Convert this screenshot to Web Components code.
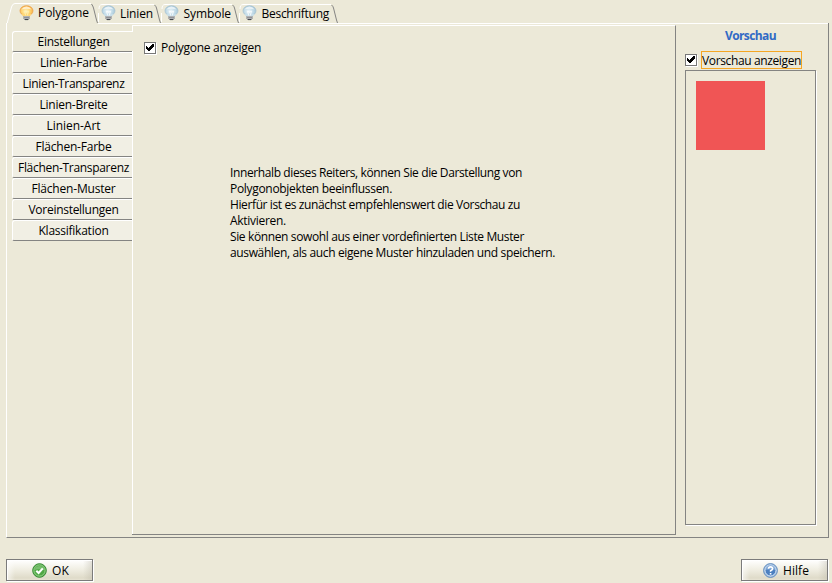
<!DOCTYPE html>
<html lang="de"><head><meta charset="utf-8"><title>Polygone</title>
<style>
html,body{margin:0;width:832px;height:583px;overflow:hidden;background:#ece9d8}
body{font:12px/16px "Open Sans","Noto Sans",sans-serif;color:#000;display:flex;flex-direction:column}
</style></head><body>
<style-dialog></style-dialog>
<script>
const make=(name,html,init)=>customElements.define(name,class extends HTMLElement{
  connectedCallback(){ if(this.shadowRoot)return; const t=document.createElement('template');
    t.innerHTML=html; this.attachShadow({mode:'open'}).append(t.content.cloneNode(true)); if(init)init(this,this.shadowRoot);}
});
// Text line set to a fixed advance width through letter spacing
make('fit-text','<style>:host{display:block;white-space:pre;flex:none}span{display:inline-block}</style><span></span>',(e,r)=>{
  const s=r.querySelector('span'),w=+e.getAttribute('w'); s.textContent=e.getAttribute('text');
  e.style.width=w+'px'; const d=(w-s.getBoundingClientRect().width)/s.textContent.length; s.style.letterSpacing=d+'px';
});
make('bulb-icon',`<style>:host{display:block;width:16px;height:16px;flex:none}svg{display:block}</style>
<svg width="16" height="16" viewBox="0 0 16 16"><defs><radialGradient id="g" cx=".45" cy=".55" r=".6"><stop offset="0" class="a"/><stop offset=".5" class="b"/><stop offset="1" class="c"/></radialGradient></defs>
<ellipse cx="7.5" cy="5.8" rx="6.5" ry="5.1" fill="url(#g)" class="rim"/><path d="M2.6 9 4.6 12h5.8l2-3z" class="n"/>
<path d="M2.3 4.6Q4.5 1.3 7.5 1.4T12.7 4.6Q7.5 2.8 2.3 4.6z" fill="#fff" opacity=".65"/><path d="M5.5 6.2 6.7 10.5M9.5 6.2 8.3 10.5M5.5 6.2l2 1 2-1" class="f"/>
<path d="M4.5 11h6v2.5L9.3 15H5.7L4.5 13.5z" fill="#777b80"/><path d="M4.7 11.7h5.6M4.9 13.3h5" stroke="#ddd" stroke-width=".7"/><path d="M6 14.6h3" stroke="#3d4147"/></svg>`,(e,r)=>{
  const on=e.hasAttribute('on'),c=on?['#fff6c8','#ffd777','#f8ab3b','#e9a04a','#fff3b4']:['#f4fafc','#c8dfea','#9fc3d6','#a9c3d1','#fff'];
  ['a','b','c'].forEach((k,i)=>r.querySelector('.'+k).setAttribute('stop-color',c[i]));
  r.querySelector('.n').setAttribute('fill',c[1]);
  const m=r.querySelector('.rim');m.setAttribute('stroke',c[3]);m.setAttribute('stroke-width','.8');
  const f=r.querySelector('.f');f.setAttribute('fill','none');f.setAttribute('stroke',c[4]);f.setAttribute('stroke-width','.8');
});
make('top-tab',`<style>:host{display:grid;height:23px;flex:none}svg,.c{grid-area:1/1}svg{display:block;overflow:visible}
.c{display:flex;align-items:flex-start}</style><svg height="23" fill="none"><path class="l" stroke="#fff"/><path class="r" stroke="#848482"/></svg>
<div class="c"></div>`,(e,r)=>{
  const w=+e.getAttribute('w'),on=e.hasAttribute('on'),y=on?3.5:4.5; e.style.width=w+'px';
  r.querySelector('svg').setAttribute('width',w);
  r.querySelector('.l').setAttribute('d',on?`M1.5 23V22L5.5 7Q6.5 3.5 9 3.5H${w-7}`:`M.5 22V13M1 9Q1 ${y} 4 ${y}H${w-7}`);
  r.querySelector('.r').setAttribute('d',`M${w-6.5} ${y+.5}Q${w-5} 6 ${w-4.5} 8L${w-1.5} 20L${w-.5} 23`);
  const c=r.querySelector('.c'),b=document.createElement('bulb-icon'),f=document.createElement('fit-text');
  c.style.padding=`5px 0 0 ${e.getAttribute('pad')}px`;
  if(on)b.setAttribute('on','');f.setAttribute('w',e.getAttribute('tw'));f.setAttribute('text',e.getAttribute('text'));
  f.style.marginLeft=e.getAttribute('gap')+'px';f.style.marginTop=on?'0':'1px';c.append(b,f);
});
make('side-tab',`<style>:host{display:flex;justify-content:center;box-sizing:border-box;height:21px;margin-left:5px;padding-top:2px;border-top:1px solid #fff;border-left:1px solid #fff;border-bottom:1px solid #848482;border-radius:3px 0 0 2px;background:#f1efe4;padding-left:2px}
:host([on]){background:#ece9d8}</style><slot></slot>`);
make('check-box',`<style>:host{display:flex}i{box-sizing:border-box;width:12px;height:12px;border:1px solid #777;background:#fff;box-shadow:1px 1px #fff;flex:none}svg{display:block}</style>
<i><svg width="10" height="10" shape-rendering="crispEdges"><path d="M1 3h1v1h1v1h1V4h1V3h1V2h1V1h2v3H8v1H7v1H6v1H5v1H3V7H2V6H1z"/></svg></i><slot></slot>`);
make('push-button',`<style>:host{box-sizing:border-box;display:flex;width:87px;height:22px;border:1px solid #7b7b7b;box-shadow:1px 1px #fff,inset 1px 1px #fff;background:linear-gradient(90deg,#fff9 0,#fff0 8px,#fff0 76px,#bbb7a866),linear-gradient(#fff,#f1efe4 45%,#dfdbc9 90%,#e7e3d3);padding:3px 0 0 25px}
:host([help]){padding-left:21px}svg{display:block;margin-right:5px}</style><svg width="15" height="15" viewBox="0 0 15 15"></svg><slot></slot>`,(e,r)=>{
  r.querySelector('svg').innerHTML=e.hasAttribute('help')?
  '<circle cx="7.5" cy="7.5" r="6.9" fill="#a9c5e4" stroke="#5682b8" stroke-width=".9"/><circle cx="7.5" cy="7.5" r="5.4" fill="#4c80c0" stroke="#e6f0fa" stroke-width=".7"/><path d="M2.5 6.8a5 5 0 0 1 10 0Q7 6 2.5 6.8" fill="#9dbce0" opacity=".65"/><path d="M5.5 5.8Q5.6 3.9 7.6 3.9T9.6 5.7Q9.6 6.8 7.6 7.7V8.8M7.6 10v1.6" fill="none" stroke="#fff" stroke-width="1.6"/>':
  '<circle cx="7.5" cy="7.5" r="6.8" fill="#4fa845" stroke="#348832"/><circle cx="7.5" cy="7.5" r="5.6" fill="none" stroke="#9bd58e" stroke-width=".9"/><path d="M2.6 7a5 5 0 0 1 9.8 0Q7 5.5 2.6 7" fill="#a0d494" opacity=".5"/><path d="M4.3 7.8 6.6 10l4.2-4.6" fill="none" stroke="#fff" stroke-width="2.1"/>';
});
make('preview-pane',`<style>:host{display:block;box-sizing:border-box;width:152px;padding:4px 0 0 9px}.h{font-weight:700;color:#316ac5;margin:0 0 0 40px}
check-box{height:18px;margin-top:7px}.f{box-sizing:border-box;margin:0 0 0 4px;width:101px;height:18px;border:1px solid #f5a623}
.b{box-sizing:border-box;width:131px;height:455px;border:1px solid #848482;box-shadow:1px 1px #fff;padding:10px;margin-top:1px}.s{width:69px;height:69px;background:#f05555}</style>
<fit-text class="h" w="51" text="Vorschau"></fit-text><check-box style="align-items:center"><div class="f"><fit-text w="99" text="Vorschau anzeigen" style="padding-top:1px"></fit-text></div></check-box><div class="b"><div class="s"></div></div>`);
make('style-dialog',`<style>:host{display:block;width:832px;height:583px}.tabs{display:flex;height:23px;padding-left:6px}
.panel{box-sizing:border-box;display:flex;margin-left:6px;width:823px;height:515px;border:1px solid #848482;border-top:0;border-left-color:#fff;padding-top:1px;background:linear-gradient(#fff,#fff) 91px 0/100% 1px no-repeat}
nav{width:125px;padding-top:7px;flex:none}
main{box-sizing:border-box;margin-top:1px;width:544px;height:510px;flex:none;border:1px solid #848482;border-top-color:#fff;border-left:0;padding:14px 0 0 12px;background:linear-gradient(#fff 6px,#fff0 6px 25px,#fff 25px) 0 0/1px 100% no-repeat}
main check-box{align-items:center}main check-box fit-text{margin-left:5px}.t{margin:109px 0 0 86px}footer{display:flex;justify-content:space-between;padding:21px 4px 0 6px}</style>
<div class="tabs"></div><div class="panel"><nav></nav><main><check-box><fit-text w="100" text="Polygone anzeigen"></fit-text></check-box><div class="t"></div></main><preview-pane></preview-pane></div>
<footer><push-button><fit-text w="17" text="OK"></fit-text></push-button><push-button help><fit-text w="26" text="Hilfe"></fit-text></push-button></footer>`,(e,r)=>{
  const add=(p,n)=>r.querySelector(p).append(n);
  [['Polygone',92,51,13,3],['Linien',63,33,3,3],['Symbole',78,47.5,3,3.5],['Beschriftung',99,67.5,3,3.5]].forEach(([s,w,tw,pad,gap],i)=>{
    const t=document.createElement('top-tab');for(const [k,v] of Object.entries({text:s,w,tw,pad,gap}))t.setAttribute(k,v);
    if(!i)t.setAttribute('on','');add('.tabs',t);
  });
  const line=(s,w)=>{const f=document.createElement('fit-text');f.setAttribute('w',w);f.setAttribute('text',s);return f};
  [['Einstellungen',72],['Linien-Farbe',67],['Linien-Transparenz',102],['Linien-Breite',68],['Linien-Art',54],['Flächen-Farbe',76],['Flächen-Transparenz',111],['Flächen-Muster',84],['Voreinstellungen',90],['Klassifikation',70]].forEach(([s,w],i)=>{
    const t=document.createElement('side-tab');if(!i)t.setAttribute('on','');t.append(line(s,w));add('nav',t)});
  [['Innerhalb dieses Reiters, können Sie die Darstellung von',292],['Polygonobjekten beeinflussen.',162],['Hierfür ist es zunächst empfehlenswert die Vorschau zu',290],['Aktivieren.',56],['Sie können sowohl aus einer vordefinierten Liste Muster',294],['auswählen, als auch eigene Muster hinzuladen und speichern.',325]].forEach(a=>add('.t',line(...a)));
});
</script></body></html>
